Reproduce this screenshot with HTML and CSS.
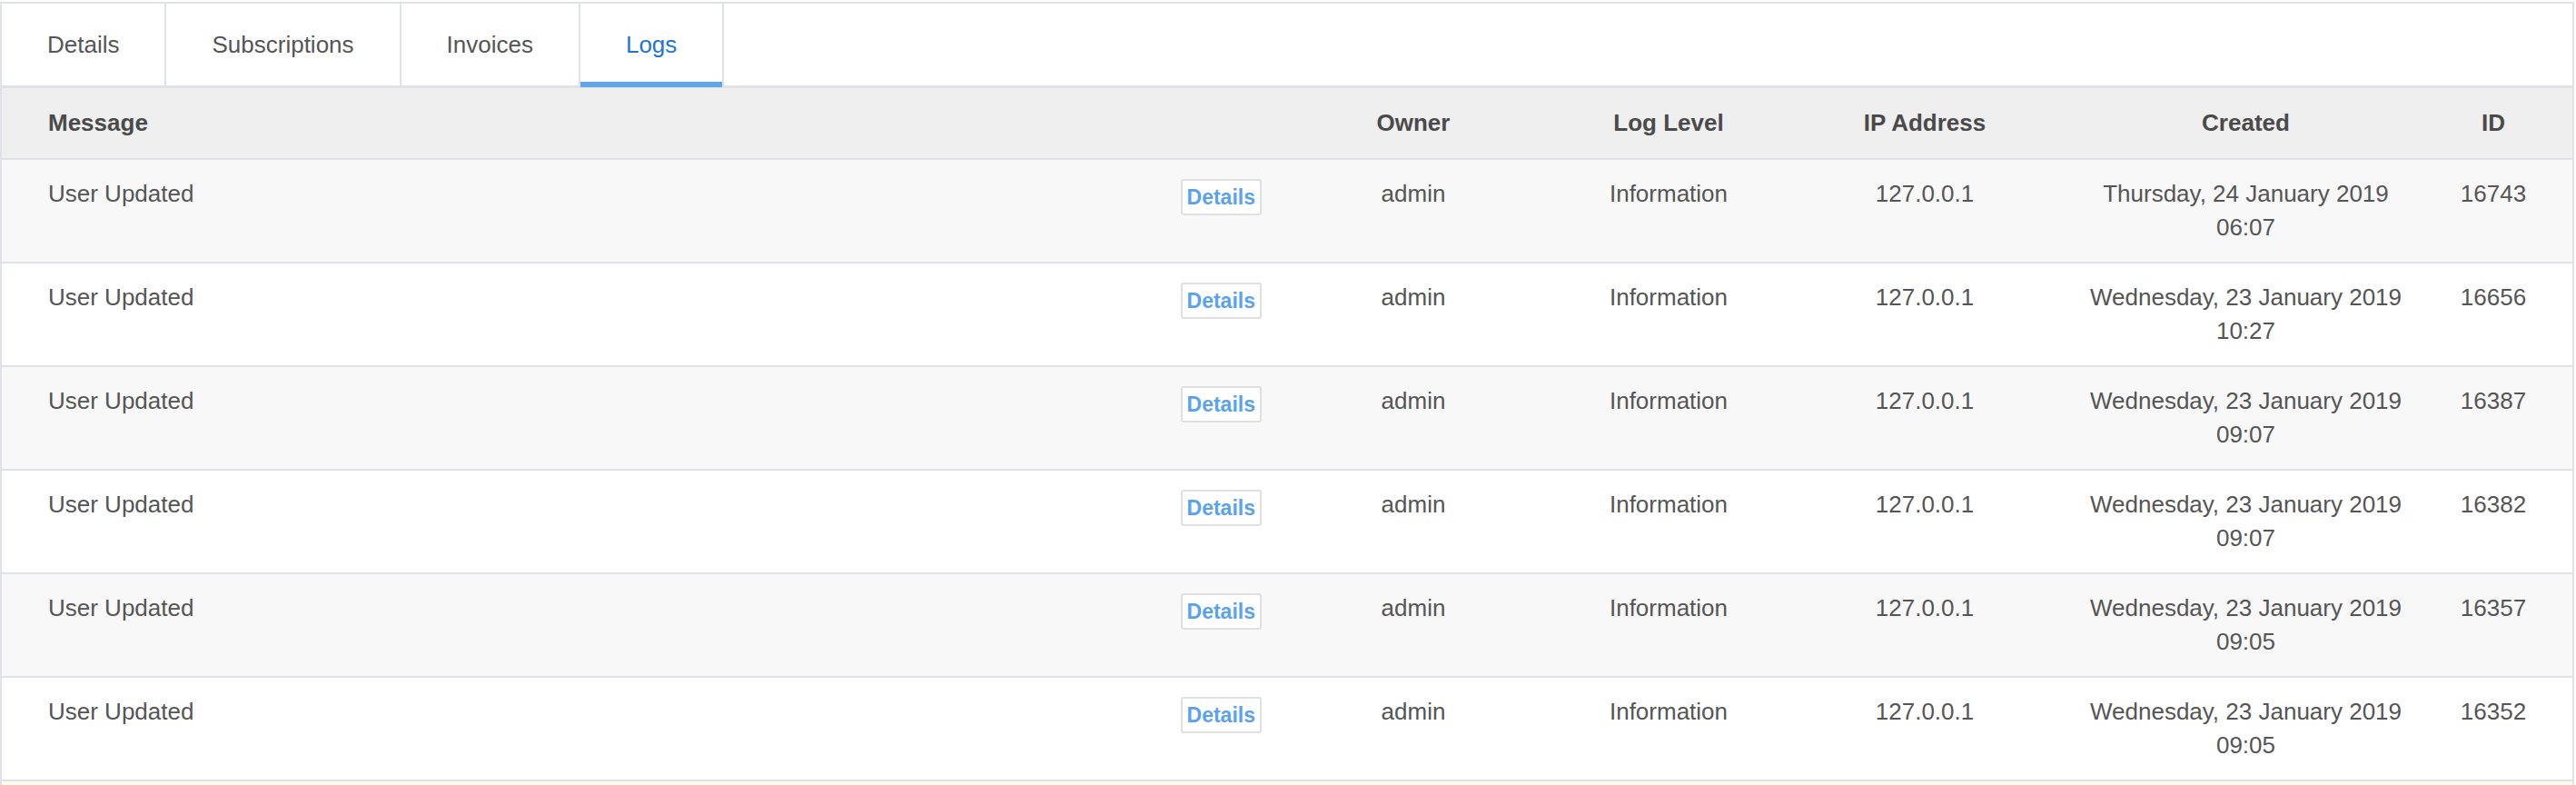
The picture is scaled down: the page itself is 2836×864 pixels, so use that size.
FILE: index.html
```html
<!DOCTYPE html>
<html lang="en">

<head>
    <meta charset="UTF-8">
    <meta name="viewport" content="width=device-width, initial-scale=1.0">
    <title>Logs</title>
    <link rel="stylesheet" href="styles.css">
</head>

<body>
    <div class="panel">
        <div class="tabs">
            <a class="tab">Details</a>
            <a class="tab">Subscriptions</a>
            <a class="tab">Invoices</a>
            <a class="tab active">Logs</a>
        </div>

        <table class="logs">
            <colgroup>
                <col class="c-msg">
                <col class="c-owner">
                <col class="c-level">
                <col class="c-ip">
                <col class="c-created">
                <col class="c-id">
            </colgroup>
            <thead>
                <tr>
                    <th class="msg">Message</th>
                    <th>Owner</th>
                    <th>Log Level</th>
                    <th>IP Address</th>
                    <th>Created</th>
                    <th>ID</th>
                </tr>
            </thead>
            <tbody>
                <tr>
                    <td class="msg"><button class="btn-details">Details</button>User Updated</td>
                    <td>admin</td>
                    <td>Information</td>
                    <td>127.0.0.1</td>
                    <td>Thursday, 24 January 2019 06:07</td>
                    <td>16743</td>
                </tr>
                <tr>
                    <td class="msg"><button class="btn-details">Details</button>User Updated</td>
                    <td>admin</td>
                    <td>Information</td>
                    <td>127.0.0.1</td>
                    <td>Wednesday, 23 January 2019 10:27</td>
                    <td>16656</td>
                </tr>
                <tr>
                    <td class="msg"><button class="btn-details">Details</button>User Updated</td>
                    <td>admin</td>
                    <td>Information</td>
                    <td>127.0.0.1</td>
                    <td>Wednesday, 23 January 2019 09:07</td>
                    <td>16387</td>
                </tr>
                <tr>
                    <td class="msg"><button class="btn-details">Details</button>User Updated</td>
                    <td>admin</td>
                    <td>Information</td>
                    <td>127.0.0.1</td>
                    <td>Wednesday, 23 January 2019 09:07</td>
                    <td>16382</td>
                </tr>
                <tr>
                    <td class="msg"><button class="btn-details">Details</button>User Updated</td>
                    <td>admin</td>
                    <td>Information</td>
                    <td>127.0.0.1</td>
                    <td>Wednesday, 23 January 2019 09:05</td>
                    <td>16357</td>
                </tr>
                <tr>
                    <td class="msg"><button class="btn-details">Details</button>User Updated</td>
                    <td>admin</td>
                    <td>Information</td>
                    <td>127.0.0.1</td>
                    <td>Wednesday, 23 January 2019 09:05</td>
                    <td>16352</td>
                </tr>
                <tr class="warn">
                    <td colspan="6"></td>
                </tr>
            </tbody>
        </table>
    </div>
</body>

</html>
```

FILE: styles.css
```css
* {
    margin: 0;
    padding: 0;
    box-sizing: border-box;
}

body {
    background-color: #fff;
    font-family: "Liberation Sans", Arial, sans-serif;
    font-size: 26px;
    color: #555;
    overflow: hidden;
}

.panel {
    margin: 2px 2px 0 0;
    border: 2px solid #dfe3e8;
    border-bottom: 0;
}

/* tabs */
.tabs {
    display: flex;
    border-bottom: 3px solid #dfe3e8;
}

.tab {
    position: relative;
    padding: 0 50px;
    line-height: 90px;
    border-right: 2px solid #dfe3e8;
    color: #555;
    cursor: pointer;
}

.tab.active {
    color: #2374d4;
}

.tab.active::after {
    content: "";
    position: absolute;
    left: 0;
    right: 0;
    bottom: -2px;
    height: 6px;
    background-color: #62a6e9;
}

/* table */
.logs {
    width: 100%;
    table-layout: fixed;
    border-collapse: collapse;
}

.c-msg { width: 1387px; }
.c-owner { width: 334px; }
.c-level { width: 228px; }
.c-ip { width: 336px; }
.c-created { width: 371px; }
.c-id { width: 174px; }

.logs th,
.logs td {
    text-align: center;
    vertical-align: top;
    line-height: 37px;
    padding: 19px 10px 19px;
    border-bottom: 2px solid #dfe3e8;
}

.logs th {
    background-color: #efefef;
    color: #4a4a4a;
    font-weight: bold;
    padding: 20px 10px 20px;
}

.logs .msg {
    text-align: left;
    padding-left: 51px;
    padding-right: 0;
}

.logs tbody tr:nth-child(odd) {
    background-color: #f8f8f8;
}

.logs tbody tr.warn {
    background-color: #fcfcef;
}

.logs tr.warn td {
    height: 112px;
}

.btn-details {
    float: right;
    margin-top: 2px;
    padding: 2px 5px;
    font-family: inherit;
    font-size: 23px;
    font-weight: bold;
    line-height: 32px;
    color: #5aa2ee;
    background-color: #fff;
    border: 2px solid #e0e0e0;
    border-radius: 3px;
    cursor: pointer;
}
```
